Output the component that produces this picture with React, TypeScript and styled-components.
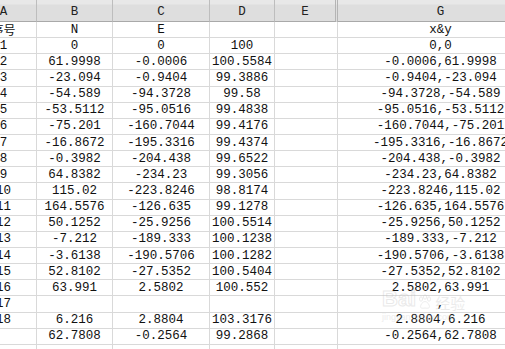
import React from 'react';
import styled, { createGlobalStyle } from 'styled-components';

type Row = [string, string, string, string, string];

const rows: Row[] = [
  ['序号', 'N', 'E', '', 'x&y'],
  ['1', '0', '0', '100', '0,0'],
  ['2', '61.9998', '-0.0006', '100.5584', '-0.0006,61.9998'],
  ['3', '-23.094', '-0.9404', '99.3886', '-0.9404,-23.094'],
  ['4', '-54.589', '-94.3728', '99.58', '-94.3728,-54.589'],
  ['5', '-53.5112', '-95.0516', '99.4838', '-95.0516,-53.5112'],
  ['6', '-75.201', '-160.7044', '99.4176', '-160.7044,-75.201'],
  ['7', '-16.8672', '-195.3316', '99.4374', '-195.3316,-16.8672'],
  ['8', '-0.3982', '-204.438', '99.6522', '-204.438,-0.3982'],
  ['9', '64.8382', '-234.23', '99.3056', '-234.23,64.8382'],
  ['10', '115.02', '-223.8246', '98.8174', '-223.8246,115.02'],
  ['11', '164.5576', '-126.635', '99.1278', '-126.635,164.5576'],
  ['12', '50.1252', '-25.9256', '100.5514', '-25.9256,50.1252'],
  ['13', '-7.212', '-189.333', '100.1238', '-189.333,-7.212'],
  ['14', '-3.6138', '-190.5706', '100.1282', '-190.5706,-3.6138'],
  ['15', '52.8102', '-27.5352', '100.5404', '-27.5352,52.8102'],
  ['16', '63.991', '2.5802', '100.552', '2.5802,63.991'],
  ['17', '', '', '', ','],
  ['18', '6.216', '2.8804', '103.3176', '2.8804,6.216'],
  ['', '62.7808', '-0.2564', '99.2868', '-0.2564,62.7808'],
  ['', '', '', '', ''],
];

const headers = ['A', 'B', 'C', 'D', 'E', 'G'];

const App = () => (
  <>
    <GlobalStyle />
    <Viewport>
      <Sheet>
        {headers.map((h) => (
          <HeaderCell key={h} $hiddenAfter={h === 'E'}>{h}</HeaderCell>
        ))}
        {rows.map((r, i) => (
          <React.Fragment key={i}>
            <Cell $cjk={i === 0}>{r[0]}</Cell>
            <Cell>{r[1]}</Cell>
            <Cell>{r[2]}</Cell>
            <Cell>{r[3]}</Cell>
            <Cell />
            <Cell>{r[4]}</Cell>
          </React.Fragment>
        ))}
      </Sheet>
      <Watermark>
        <WmBrand>
          Bai
          <svg width="16" height="16" viewBox="0 0 16 16">
            <g fill="none" stroke="#c9c9c9" strokeWidth="1">
              <ellipse cx="4" cy="5" rx="1.6" ry="2.2" />
              <ellipse cx="8" cy="3" rx="1.6" ry="2.2" />
              <ellipse cx="12" cy="5" rx="1.6" ry="2.2" />
              <path d="M8 7.5c-2.5 0-4.5 3.5-4.5 5.2 0 1.6 1.8 1.8 4.5 1.3 2.7.5 4.5.3 4.5-1.3 0-1.7-2-5.2-4.5-5.2z" />
            </g>
          </svg>
          <WmCn>经验</WmCn>
        </WmBrand>
        <WmUrl>jingyan.baidu.com</WmUrl>
      </Watermark>
    </Viewport>
  </>
);

export default App;

// ── Styled Components ──

const GlobalStyle = createGlobalStyle`
  html, body {
    margin: 0;
    padding: 0;
    background: #ffffff;
    overflow: hidden;
  }
`;

const Viewport = styled.div`
  position: relative;
  width: 505px;
  height: 349px;
  overflow: hidden;
  background: #fff;
`;

const Sheet = styled.div`
  display: grid;
  grid-template-columns: 66px 76px 97px 65px 63px 206px;
  grid-template-rows: 22px;
  grid-auto-rows: 16.15px;
  margin-left: -29px;
  font-family: "Liberation Mono", "Noto Sans CJK SC", monospace;
  font-size: 12.5px;
  color: #111;
`;

const HeaderCell = styled.div<{ $hiddenAfter?: boolean }>`
  box-sizing: border-box;
  display: flex;
  align-items: center;
  justify-content: center;
  padding-top: 2px;
  background: linear-gradient(#e8e8e8 0, #e8e8e8 4px, #dedede 5px, #dedede 100%);
  border-bottom: 1px solid #a9a9a9;
  border-right: ${({ $hiddenAfter }) => ($hiddenAfter ? '3px double #b4b4b4' : '1px solid #bdbdbd')};
  color: #222;
`;

const Cell = styled.div<{ $cjk?: boolean }>`
  box-sizing: border-box;
  display: flex;
  align-items: center;
  justify-content: center;
  white-space: nowrap;
  overflow: hidden;
  border-right: 1px solid #d9d9d9;
  border-bottom: 1px solid #d9d9d9;
  font-family: ${({ $cjk }) => ($cjk ? '"Noto Sans CJK SC", sans-serif' : 'inherit')};
  font-size: ${({ $cjk }) => ($cjk ? '12px' : 'inherit')};
`;

const Watermark = styled.div`
  position: absolute;
  left: 382px;
  top: 288px;
  display: flex;
  flex-direction: column;
  align-items: flex-start;
  pointer-events: none;
  opacity: 0.32;
`;

const WmBrand = styled.div`
  display: flex;
  align-items: flex-end;
  gap: 1px;
  font-family: "Liberation Sans", Arial, sans-serif;
  font-size: 22px;
  font-weight: 700;
  color: transparent;
  -webkit-text-stroke: 1px #bdbdbd;
  line-height: 1;
`;

const WmCn = styled.span`
  font-family: "Noto Sans CJK SC", sans-serif;
  font-size: 15px;
  font-weight: 400;
  -webkit-text-stroke: 0;
  color: #c4c4c4;
  margin-left: 1px;
`;

const WmUrl = styled.div`
  margin-top: 2px;
  font-family: "Liberation Sans", Arial, sans-serif;
  font-size: 9px;
  color: #c8c8c8;
`;
